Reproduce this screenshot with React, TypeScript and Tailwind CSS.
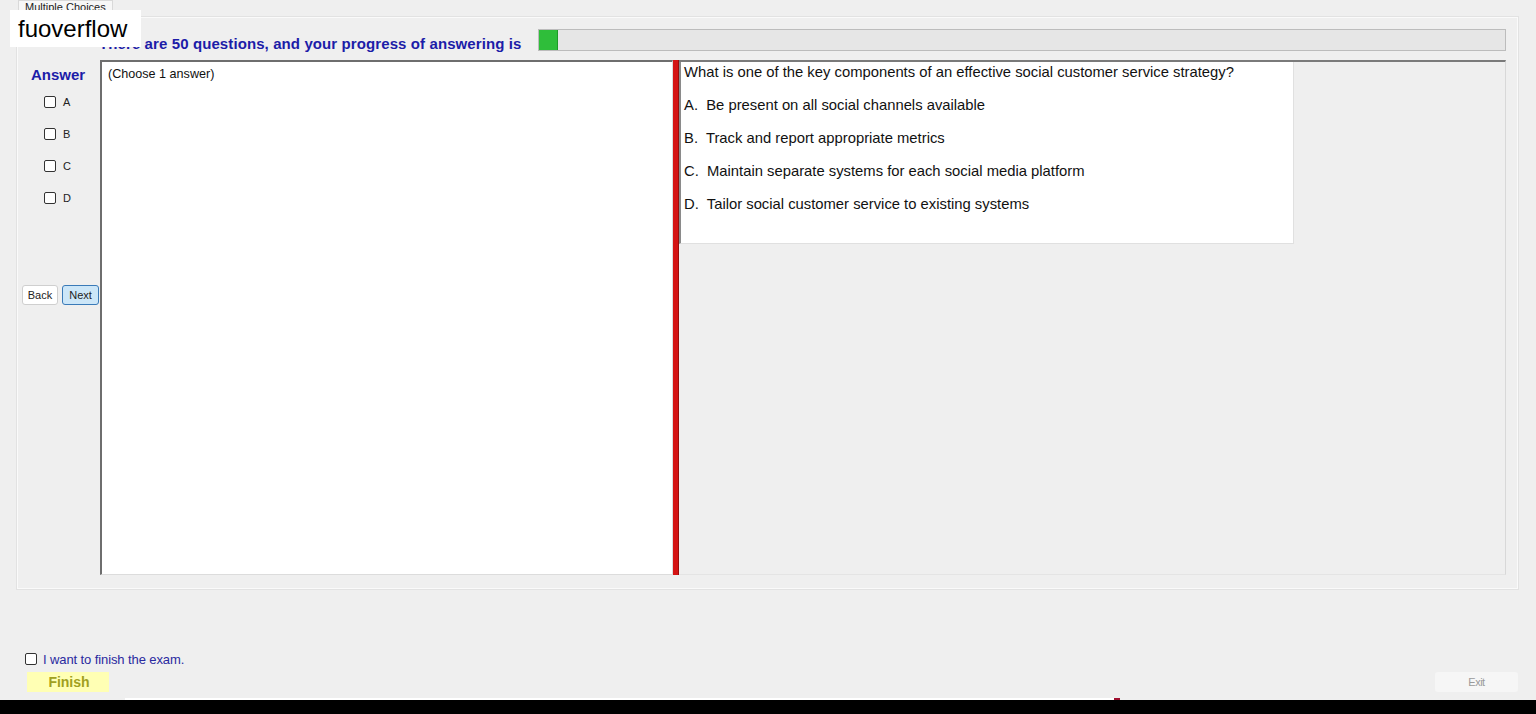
import { useState } from "react";

const TOTAL_QUESTIONS = 50;
const ANSWERED = 1;

const OPTIONS = [
  { key: "A", text: "Be present on all social channels available" },
  { key: "B", text: "Track and report appropriate metrics" },
  { key: "C", text: "Maintain separate systems for each social media platform" },
  { key: "D", text: "Tailor social customer service to existing systems" },
];

const Box = ({ checked, onClick }: { checked: boolean; onClick: () => void }) => (
  <div
    onClick={onClick}
    className="w-[12px] h-[12px] rounded-[2px] border border-[#333] bg-white flex items-center justify-center cursor-pointer"
  >
    {checked && <div className="w-[6px] h-[6px] bg-[#333]" />}
  </div>
);

const App = () => {
  const [picked, setPicked] = useState<string[]>([]);
  const [finish, setFinish] = useState(false);

  const toggle = (key: string) => {
    setPicked((prev) => (prev.includes(key) ? prev.filter((k) => k !== key) : [key]));
  };

  const progress = (ANSWERED / TOTAL_QUESTIONS) * 100;

  return (
    <div
      className="relative w-[1536px] h-[714px] bg-[#efefef] overflow-hidden flex flex-col"
      style={{ fontFamily: '"Liberation Sans", Arial, sans-serif' }}
    >
      {/* tab header */}
      <div className="h-[17px] flex pl-[18px]">
        <div className="h-[13px] px-[6px] bg-[#f7f7f7] border border-b-0 border-[#d9d9d9] text-[11px] leading-[12px] text-[#222]">
          Multiple Choices
        </div>
      </div>

      {/* tab page */}
      <div className="ml-[17px] w-[1501px] h-[572px] border border-[#fafafa] shadow-[0_0_0_1px_#e2e2e2] flex flex-col pl-[4px]">
        <div className="h-[11px]" />
        <div className="flex items-center h-[22px]">
          <div className="w-[77px]" />
          <div className="text-[15px] font-bold text-[#1c1ca8] w-[439px] pt-[8px] tracking-[0.1px] whitespace-nowrap">
            There are {TOTAL_QUESTIONS} questions, and your progress of answering is
          </div>
          <div className="w-[968px] h-[22px] border border-[#bcbcbc] bg-[#e6e6e6] flex">
            <div className="h-full bg-[#2fbe3a] border-r border-[#1f9a28]" style={{ width: `${progress * 0.96}%` }} />
          </div>
        </div>
        <div className="h-[9px]" />

        <div className="flex h-[515px]">
          {/* answer column */}
          <div className="w-[78px] flex flex-col">
            <div className="text-[15px] font-bold text-[#1c1ca8] pt-[7px] pl-[9px] leading-[16px]">Answer</div>
            <div className="flex flex-col gap-[20px] pl-[22px] pt-[13px]">
              {OPTIONS.map((o) => (
                <div key={o.key} className="flex items-center gap-[7px] h-[12px]">
                  <Box checked={picked.includes(o.key)} onClick={() => toggle(o.key)} />
                  <span className="text-[11px] text-[#222]">{o.key}</span>
                </div>
              ))}
            </div>
            <div className="flex gap-[4px] mt-[81px]">
              <button className="w-[36px] h-[20px] bg-white border border-[#cfcfcf] rounded-[3px] text-[11px] text-[#222]">
                Back
              </button>
              <button className="w-[37px] h-[20px] bg-[#cce6f8] border border-[#3a7ab8] rounded-[3px] text-[11px] text-[#222]">
                Next
              </button>
            </div>
          </div>

          {/* explanation pane */}
          <div className="w-[573px] bg-white border-t-2 border-l-2 border-t-[#6e6e6e] border-l-[#6e6e6e] border-b border-r border-b-[#dcdcdc] border-r-[#dcdcdc] px-[6px] pt-[3px]">
            <div className="text-[12.6px] text-[#111]">(Choose 1 answer)</div>
          </div>

          {/* splitter */}
          <div className="w-[6px] bg-[#d41414] border-r border-[#9a0c0c]" />

          {/* question pane */}
          <div className="w-[827px] border-t-2 border-t-[#7a7a7a] border-r border-r-[#d8d8d8] border-b border-b-[#e4e4e4]">
            <div className="w-[615px] h-[182px] bg-white border-l-2 border-l-[#8a8a8a] border-r border-r-[#e0e0e0] border-b border-b-[#e0e0e0] pl-[3px] text-[14.8px] text-[#111]">
              <div className="leading-[18px] pt-[1px]">
                What is one of the key components of an effective social customer service strategy?
              </div>
              {OPTIONS.map((o) => (
                <div key={o.key} className="leading-[18px] mt-[15px]">
                  {o.key}.&nbsp; {o.text}
                </div>
              ))}
            </div>
          </div>
        </div>
      </div>

      {/* footer controls */}
      <div className="flex flex-col pl-[25px] mt-[63px]">
        <div className="flex items-center gap-[6px] h-[14px]">
          <Box checked={finish} onClick={() => setFinish(!finish)} />
          <span className="text-[13px] text-[#2a2aa0] tracking-[-0.1px] pt-[2px]">I want to finish the exam.</span>
        </div>
        <div className="flex justify-between items-end mt-[6px] pr-[18px]">
          <button className="ml-[2px] w-[82px] h-[20px] bg-[#ffffb4] text-[14px] font-bold text-[#a0a020] pl-[2px]">
            Finish
          </button>
          <button className="w-[83px] h-[20px] bg-[#f6f6f6] rounded-[3px] text-[11px] text-[#9a9a9a] tracking-[-0.5px]">
            Exit
          </button>
        </div>
      </div>

      {/* taskbar edge */}
      <div className="mt-auto h-[16px] flex flex-col">
        <div className="h-[2px] ml-[125px] w-[995px] bg-white flex justify-end">
          <div className="w-[6px] h-[2px] bg-[#a01030]" />
        </div>
        <div className="flex-1 bg-black" />
      </div>

      {/* watermark */}
      <div className="absolute left-[10px] top-[10px] w-[131px] h-[37px] bg-white flex items-center pl-[8px] text-[24px] text-black leading-none">
        fuoverflow
      </div>
    </div>
  );
};

export default App;
